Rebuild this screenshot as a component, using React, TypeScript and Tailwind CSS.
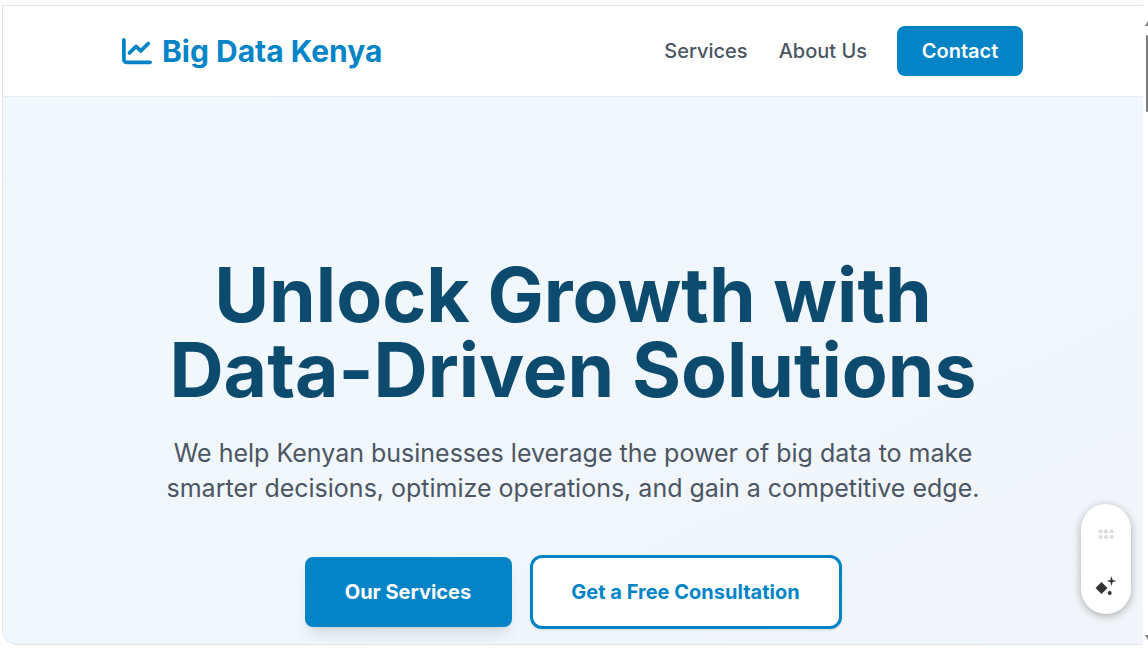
import { FaChartLine } from "react-icons/fa6";

const font = "font-['Inter',sans-serif]";

const App = () => {
  return (
    <div className={`relative flex h-[657px] w-[1148px] overflow-hidden bg-white pt-[5px] pb-3 ${font}`}>
      {/* page frame */}
      <div className="ml-[2px] flex w-[1141px] flex-col overflow-hidden rounded-bl-2xl border-t border-b border-l border-[#e2e4e8]">
        <header className="flex h-[91px] shrink-0 items-center border-b border-[#e8edf2] bg-white pl-[119px]">
          <div className="flex w-[901px] items-center justify-between">
            <a className="flex items-center gap-[10px] text-[30px] font-bold text-[#0284c7]">
              <FaChartLine size={30} />
              <span>Big Data Kenya</span>
            </a>
            <nav className="flex items-center gap-[31px] text-[20px] font-medium text-[#4b5563]">
              <a>Services</a>
              <a>About Us</a>
              <a className="ml-[-1px] flex h-[50px] w-[126px] items-center justify-center rounded-lg bg-[#0284c7] font-semibold text-white">
                Contact
              </a>
            </nav>
          </div>
        </header>

        <main className="flex flex-1 flex-col items-center bg-gradient-to-br from-[#f0f9ff] to-[#f1f5f9] pt-[160px] text-center">
          <h1 className="text-[75px] leading-[75px] font-bold text-[#0c4a6e]">
            Unlock Growth with
            <br />
            Data-Driven Solutions
          </h1>
          <p className="mt-[29px] w-[860px] text-[25px] leading-[35px] text-[#4b5563]">
            We help Kenyan businesses leverage the power of big data to make smarter decisions, optimize operations, and gain a competitive edge.
          </p>
          <div className="mt-[49px] flex items-center gap-[18px] text-[20px] font-bold">
            <a className="flex h-[70px] w-[207px] items-center justify-center rounded-lg bg-[#0284c7] text-white shadow-lg">
              Our Services
            </a>
            <a className="flex h-[74px] w-[312px] items-center justify-center rounded-xl border-[3px] border-[#0284c7] bg-white text-[#0284c7] shadow-sm">
              Get a Free Consultation
            </a>
          </div>
        </main>
      </div>

      {/* browser scrollbar */}
      <div className="relative w-[5px]">
        <svg className="absolute top-[16px] left-[2px]" width="4" height="5" viewBox="0 0 4 5" fill="#7d7d7d">
          <path d="M3 0 0 5H4V0Z" />
        </svg>
        <div className="absolute top-[30px] left-[3px] h-[77px] w-[2px] rounded-sm bg-[#7d7d7d]" />
        <svg className="absolute top-[630px] left-[2px]" width="4" height="5" viewBox="0 0 4 5" fill="#7d7d7d">
          <path d="M0 0H4V5H3Z" />
        </svg>
      </div>

      {/* floating widget */}
      <div className="absolute top-[504px] left-[1081px] flex h-[110px] w-[50px] flex-col items-center justify-between rounded-full bg-white pt-[25px] pb-[15px] shadow-[0_2px_8px_rgba(0,0,0,0.3)]">
        <svg width="16" height="12" viewBox="0 0 16 12" fill="#dcdcdc">
          <circle cx="2.5" cy="2.5" r="2.1" />
          <circle cx="8" cy="2.5" r="2.1" />
          <circle cx="13.5" cy="2.5" r="2.1" />
          <circle cx="2.5" cy="8" r="2.1" />
          <circle cx="8" cy="8" r="2.1" />
          <circle cx="13.5" cy="8" r="2.1" />
        </svg>
        <svg width="22" height="24" viewBox="0 0 22 24" fill="#333">
          <path d="M6.5 7 12.5 13 6.5 19 .5 13Z" />
          <path d="M16.5 1 17.6 4.9 21.5 6 17.6 7.1 16.5 11 15.4 7.1 11.5 6 15.4 4.9Z" />
          <circle cx="14.7" cy="18" r="2" />
        </svg>
      </div>
    </div>
  );
};

export default App;
